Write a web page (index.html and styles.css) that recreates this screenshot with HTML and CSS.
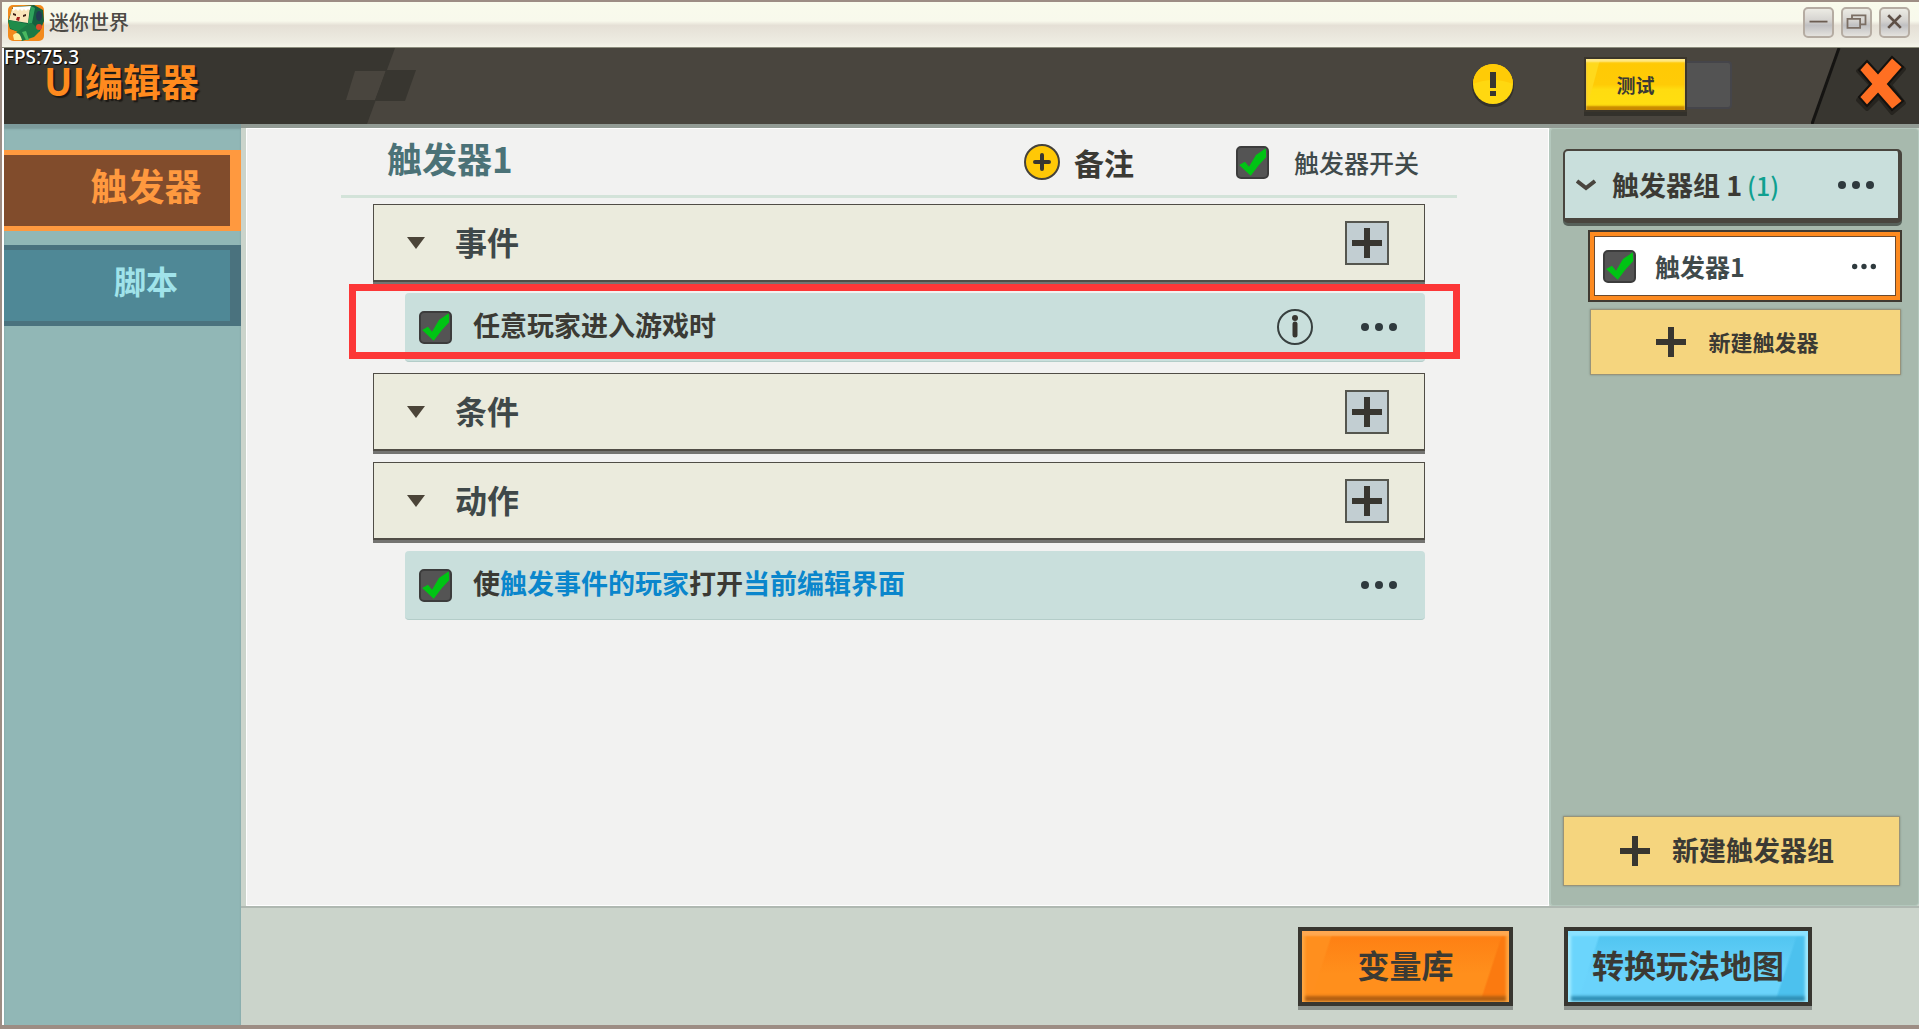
FILE: index.html
```html
<!DOCTYPE html>
<html lang="zh-CN">
<head>
    <meta charset="UTF-8">
    <meta name="viewport" content="width=device-width, initial-scale=1.0">
    <title>迷你世界</title>
    <link rel="stylesheet" href="styles.css">
</head>
<body>
    <!-- shared icons -->
    <svg class="icon-defs" aria-hidden="true">
        <symbol id="plus" viewBox="0 0 30 30">
            <path d="M12 0h6v12h12v6H18v12h-6V18H0v-6h12z" fill="#383630"/>
        </symbol>
        <symbol id="dots" viewBox="0 0 36 10">
            <circle cx="4" cy="5" r="4"/><circle cx="18" cy="5" r="4"/><circle cx="32" cy="5" r="4"/>
        </symbol>
    </svg>

    <div class="window">
        <div class="titlebar">
            <svg class="app-icon" viewBox="0 0 36 36">
                <rect width="36" height="36" rx="5" fill="#f28a1c"/>
                <path d="M5 2L26 0L35 5L36 16L32 26L24 30L14 28L2 24L0 16z" fill="#14603f"/>
                <path d="M4 4L22 2L20 18L1 15z" fill="#fbe6bb"/>
                <path d="M5 2l18-1-1 4-2-1-2 2-2-2-2 2-2-2-2 2-2-2-3 2z" fill="#fff"/>
                <path d="M23 1L27 3L24 18L20 19z" fill="#2fa35c"/>
                <path d="M0 15L20 19L22 23L10 27L2 23z" fill="#1f8c4a"/>
                <path d="M20 19l4-1 8 8-6 6-12 4-6-8z" fill="#1d7a45"/>
                <path d="M5 30q6-6 9 5H6z" fill="#fdf0a0"/>
                <path d="M14 27l4 8h3l-3-9z" fill="#48b860"/>
                <ellipse cx="31" cy="11" rx="3" ry="5" fill="#233a52"/>
                <circle cx="31" cy="22" r="3" fill="#d9482a"/>
                <path d="M5 8l3 1v2l-3-1zM15 10l3-1v2l-3 1z" fill="#402018"/>
                <path d="M9 12l3 0l-1 4l-3-1z" fill="#a8201c"/>
            </svg>
            <span class="app-name">迷你世界</span>
            <div class="window-buttons">
                <button type="button" aria-label="最小化"><svg viewBox="0 0 30 30"><path d="M5 14h20" stroke="#6b5d52" stroke-width="2"/></svg></button>
                <button type="button" aria-label="还原"><svg viewBox="0 0 30 30"><path d="M10 11V7h15v10h-5M5 11h14v10H5z" fill="none" stroke="#7b6e64" stroke-width="2"/></svg></button>
                <button type="button" aria-label="关闭"><svg viewBox="0 0 30 30"><path d="M8 7l14 14M22 7L8 21" stroke="#5e5047" stroke-width="3"/></svg></button>
            </div>
        </div>

        <div class="header">
            <svg class="header-left" viewBox="0 0 420 76">
                <path d="M0 0h391l-28 76H0z" fill="#383630"/>
                <path d="M351 23h31l-11 29h-29z" fill="#49453e"/>
                <path d="M382 22h30l-11 31h-30z" fill="#383630"/>
            </svg>
            <span class="fps">FPS:75.3</span>
            <h1>UI编辑器</h1>
            <div class="header-tools">
                <button type="button" class="warn" aria-label="提示">
                    <svg viewBox="0 0 44 44">
                        <circle cx="22" cy="23" r="21" fill="#33312b"/>
                        <circle cx="22" cy="21" r="20" fill="#ffd810"/>
                        <path d="M2 21a20 20 0 0 1 40 0q-20-8-40 0z" fill="#ffcb06"/>
                        <path d="M19 9h6v16h-6zM19 28h6v5h-6z" fill="#383630"/>
                    </svg>
                </button>
                <div class="test-switch"><button type="button">测试</button></div>
            </div>
            <button type="button" class="close" aria-label="关闭">
                <svg viewBox="0 0 108 76">
                    <path d="M28 0h80v76H0z" fill="#383630"/>
                    <path d="M28 0L1 76" stroke="#151412" stroke-width="3"/>
                    <path d="M56 15l12 13 13-17 12 10-14 16 14 18-12 10-13-16-12 12-9-9 13-15-13-14z" fill="#26241f" stroke="#26241f" stroke-width="4" stroke-linejoin="round"/>
                    <path d="M56 13l11 12 14-16 11 10-15 17 15 17-11 9-14-16-11 12-8-9 12-13-12-14z" fill="#ff6f22" stroke="#14120f" stroke-width="2"/>
                </svg>
            </button>
        </div>

        <div class="body">
            <nav class="sidebar">
                <button type="button" class="tab active">触发器</button>
                <button type="button" class="tab">脚本</button>
            </nav>

            <div class="content">
                <div class="panels">
                    <main class="editor">
                        <div class="editor-head">
                            <h2>触发器1</h2>
                            <button type="button" class="note">
                                <svg viewBox="0 0 36 36"><circle cx="18" cy="18" r="17" fill="#ffc806" stroke="#45423b" stroke-width="2"/><path d="M18 11v14M11 18h14" stroke="#383630" stroke-width="4" stroke-linecap="round"/></svg>
                                备注
                            </button>
                            <label class="toggle"><input type="checkbox" checked>触发器开关</label>
                        </div>

                        <div class="blocks">
                            <section class="block">
                                <h3>事件</h3>
                                <button type="button" class="add" aria-label="添加事件"><svg><use href="#plus"/></svg></button>
                            </section>
                            <div class="line marked">
                                <input type="checkbox" id="line1" checked>
                                <label for="line1">任意玩家进入游戏时</label>
                                <button type="button" class="info" aria-label="说明">
                                    <svg viewBox="0 0 36 36"><circle cx="18" cy="18" r="17" fill="none" stroke="#38403f" stroke-width="2"/><path d="M18 15v11" stroke="#383630" stroke-width="5" stroke-linecap="round"/><circle cx="18" cy="9" r="3" fill="#383630"/></svg>
                                </button>
                                <button type="button" class="more" aria-label="更多"><svg><use href="#dots"/></svg></button>
                            </div>
                            <section class="block">
                                <h3>条件</h3>
                                <button type="button" class="add" aria-label="添加条件"><svg><use href="#plus"/></svg></button>
                            </section>
                            <section class="block">
                                <h3>动作</h3>
                                <button type="button" class="add" aria-label="添加动作"><svg><use href="#plus"/></svg></button>
                            </section>
                            <div class="line">
                                <input type="checkbox" id="line2" checked>
                                <label for="line2">使<a href="#">触发事件的玩家</a>打开<a href="#">当前编辑界面</a></label>
                                <button type="button" class="more" aria-label="更多"><svg><use href="#dots"/></svg></button>
                            </div>
                        </div>
                    </main>

                    <aside class="groups">
                        <div class="group">
                            <svg class="chevron" viewBox="0 0 20 12"><path d="M1 2l9 7 9-7" fill="none" stroke="#49453e" stroke-width="4"/></svg>
                            <span>触发器组 1</span>
                            <span class="count">(1)</span>
                            <button type="button" class="more" aria-label="更多"><svg><use href="#dots"/></svg></button>
                        </div>
                        <div class="trigger">
                            <input type="checkbox" id="trigger1" checked>
                            <label for="trigger1">触发器1</label>
                            <button type="button" class="more small" aria-label="更多"><svg><use href="#dots"/></svg></button>
                        </div>
                        <button type="button" class="new new-trigger"><svg><use href="#plus"/></svg><span>新建触发器</span></button>
                        <button type="button" class="new new-group"><svg><use href="#plus"/></svg><span>新建触发器组</span></button>
                    </aside>
                </div>

                <footer class="actions">
                    <button type="button" class="big orange">变量库</button>
                    <button type="button" class="big blue">转换玩法地图</button>
                </footer>
            </div>
        </div>
    </div>
</body>
</html>
```
FILE: styles.css
```css
* {
    box-sizing: border-box;
}
body {
    margin: 0;
    font-family: "Noto Sans CJK SC", sans-serif;
    font-weight: bold;
    color: #3b3a34;
}
button {
    font: inherit;
    color: inherit;
    background: none;
    border: none;
    padding: 0;
    cursor: pointer;
}
svg {
    display: block;
}
h1, h2, h3 {
    margin: 0;
}
a {
    color: #0a86cc;
    text-decoration: none;
}
.icon-defs {
    display: none;
}

/* tick boxes */
input[type="checkbox"] {
    appearance: none;
    flex: none;
    width: 33px;
    height: 33px;
    margin: 0;
    border: 2px solid #3c3c3c;
    border-radius: 5px;
    background: #545454;
}
input[type="checkbox"]:checked::before {
    content: "";
    display: block;
    height: 100%;
    background: #00c414;
    clip-path: polygon(4% 60%, 24% 49%, 38% 66%, 62% 26%, 96% 3%, 97% 34%, 72% 60%, 44% 97%);
}

/* window frame */
.window {
    display: flex;
    flex-direction: column;
    min-height: 100vh;
    border: solid #9d8d84;
    border-width: 2px 0 4px 2px;
}
.titlebar {
    display: flex;
    align-items: center;
    height: 46px;
    padding: 0 9px 4px 6px;
    background: linear-gradient(#f9fbec 0%, #f8f9ec 42%, #e5e0d6 52%, #eeece2 90%, #f6f5ea 100%);
    border-bottom: 1px solid #8c8d7d;
}
.app-icon {
    width: 36px;
    height: 36px;
}
.app-name {
    margin-left: 5px;
    padding-bottom: 2px;
    font-size: 20px;
    font-weight: 500;
    color: #4d4a45;
}
.window-buttons {
    display: flex;
    gap: 7px;
    margin-left: auto;
    padding-bottom: 1px;
}
.window-buttons button {
    width: 31px;
    height: 31px;
    border: 2px solid #b5aca2;
    border-radius: 5px;
    background: linear-gradient(#ecebe4, #d4d2cf 45%, #c0c0c2 60%, #e4e2dd);
}

/* game header */
.header {
    position: relative;
    display: flex;
    align-items: center;
    height: 76px;
    margin-left: 2px;
    background: #49453e;
}
.header-left {
    position: absolute;
    left: 0;
    top: 0;
    width: 420px;
    height: 76px;
}
.fps {
    position: absolute;
    left: 0;
    top: 0;
    font: 500 19px/18px "Noto Sans", sans-serif;
    color: #fff;
    text-shadow: 1px 1px 1px #000;
    z-index: 1;
}
.header h1 {
    position: relative;
    margin-left: 40px;
    padding-bottom: 12px;
    font-size: 38px;
    line-height: 48px;
    font-weight: bold;
    color: #ff8a1e;
    text-shadow: 2px 2px 1px #1c1a16;
}
.header-tools {
    display: flex;
    align-items: center;
    gap: 69px;
    margin-left: auto;
    margin-right: 79px;
    padding-bottom: 2px;
}
.warn svg {
    width: 44px;
    height: 44px;
}
.test-switch {
    width: 148px;
    height: 48px;
    border: 2px solid #45454a;
    border-radius: 4px;
    background: #535353;
}
.test-switch button {
    display: block;
    width: 103px;
    height: 55px;
    margin: -6px 0 0 -2px;
    border: 2px solid #3a352b;
    background: linear-gradient(105deg, #ffd91c 12%, transparent 13%), linear-gradient(#ffc905 0%, #ffcb06 50%, #ffdc10 60%, #ffdf10 100%);
    box-shadow: inset 0 3px 2px #ffe98a, inset 0 -4px 2px #c98a00, 0 4px 0 #33312b;
    font-size: 19px;
    line-height: 28px;
}
.close svg {
    width: 108px;
    height: 76px;
}

.body {
    display: flex;
    flex: 1;
    margin-left: 2px;
    background: #cbd4cb;
    box-shadow: inset 0 4px 0 #929b94;
}

/* left tabs */
.sidebar {
    display: flex;
    flex-direction: column;
    gap: 14px;
    width: 237px;
    padding-top: 26px;
    background: #91b7b6;
    box-shadow: inset 0 5px 2px #7c9a9b;
}
.tab {
    height: 81px;
    padding: 0 0 12px 58px;
    border: solid #4a727e;
    border-width: 5px 11px 5px 0;
    background: #4f8896;
    color: #a0e3ea;
    font-size: 32px;
    line-height: 48px;
}
.tab.active {
    border-color: #ff993f;
    background: #814c2c;
    color: #ff993f;
    font-size: 37px;
}

.content {
    display: flex;
    flex: 1;
    flex-direction: column;
}
.panels {
    display: flex;
    flex: 1;
    padding: 4px 0 0 5px;
    border-bottom: 2px solid #afb8b1;
}

/* trigger editor */
.editor {
    flex: 1;
    padding: 0 91px 0 94px;
    border: 1px solid #fff;
    background: #f2f2f1;
}
.editor-head {
    display: flex;
    align-items: center;
    height: 69px;
    padding: 0 38px 0 46px;
    border-bottom: 3px solid #d3e3d9;
}
.editor-head h2 {
    margin-right: auto;
    padding-bottom: 8px;
    font-size: 35px;
    line-height: 48px;
    color: #4b7277;
}
.note {
    display: flex;
    align-items: center;
    gap: 14px;
    font-size: 30px;
}
.note svg {
    width: 36px;
    height: 36px;
}
.toggle {
    display: flex;
    align-items: center;
    gap: 25px;
    margin-left: 102px;
    font-size: 25px;
    font-weight: 500;
    color: #404a4b;
}
.blocks {
    display: flex;
    flex-direction: column;
    gap: 11px;
    padding: 6px 32px 0 32px;
}
.block {
    display: flex;
    align-items: center;
    justify-content: space-between;
    height: 78px;
    padding: 0 35px 0 33px;
    border: 1px solid #504d46;
    border-bottom-width: 2px;
    background: #ebebdd;
    box-shadow: 0 3px 0 #747471;
}
.block h3 {
    display: flex;
    align-items: center;
    gap: 30px;
    padding-bottom: 3px;
    font-size: 32px;
    color: #3f4849;
}
.block h3::before {
    content: "";
    margin-top: 3px;
    border: solid transparent;
    border-width: 12px 9px 0;
    border-top-color: #4b4438;
}
.add {
    display: flex;
    align-items: center;
    justify-content: center;
    width: 44px;
    height: 44px;
    border: 2px solid #55564f;
    background: #c2ced2;
}
.add svg, .new svg {
    width: 30px;
    height: 30px;
}
.line {
    position: relative;
    display: flex;
    align-items: center;
    height: 69px;
    margin-left: 32px;
    padding: 0 28px 0 14px;
    border-bottom: 1px solid #b4cdc9;
    border-radius: 4px;
    background: #c9dfdc;
}
.line label {
    flex: 1;
    padding: 0 0 6px 21px;
    font-size: 27px;
}
.info {
    margin-right: 48px;
}
.info svg {
    width: 36px;
    height: 36px;
}
.more svg {
    width: 36px;
    height: 10px;
    fill: #2f3a3e;
}
.more.small svg {
    width: 24px;
    height: 7px;
}
/* red frame drawn over the line */
.marked::after {
    content: "";
    position: absolute;
    inset: -9px -35px 2px -56px;
    border: 7px solid #fc3737;
    pointer-events: none;
}

/* trigger groups */
.groups {
    display: flex;
    flex-direction: column;
    width: 370px;
    padding: 20px 16px 19px 12px;
    border: 1px solid #b4c8bd;
    border-left-width: 2px;
    border-radius: 4px;
    background: #a7b9ad;
}
.group {
    display: flex;
    align-items: center;
    height: 74px;
    padding: 0 24px 0 11px;
    border: solid #49453e;
    border-width: 2px 4px 5px 2px;
    border-radius: 5px;
    background: #c9dfdc;
    box-shadow: 0 3px 0 #566059;
    font-size: 27px;
}
.chevron {
    width: 20px;
    height: 12px;
    margin-right: 16px;
}
.count {
    margin-left: 5px;
    color: #10a090;
    font-size: 25px;
    font-weight: 500;
}
.group .more, .trigger .more {
    margin-left: auto;
}
.trigger {
    display: flex;
    align-items: center;
    height: 72px;
    margin: 7px 0 0 25px;
    padding: 0 24px 0 9px;
    border: 2px solid #3f3a32;
    background: #fff;
    box-shadow: inset 0 0 0 4px #fd8a20, inset 0 0 0 5px #6a4a30;
    font-size: 25px;
    color: #404a4b;
}
.trigger input {
    margin: 0 19px 0 4px;
}
.new {
    display: flex;
    align-items: center;
    justify-content: center;
    border: 1px solid #98937a;
    background: #f5d57e;
    box-shadow: 0 0 2px #7e8c80;
}
.new span {
    padding-bottom: 3px;
}
.new-trigger {
    gap: 22px;
    height: 66px;
    margin: 7px 1px 0 27px;
    padding-right: 16px;
    font-size: 22px;
}
.new-group {
    gap: 22px;
    height: 70px;
    margin: auto 2px 0 0;
    padding-right: 9px;
    font-size: 27px;
}

/* bottom bar */
.actions {
    display: flex;
    justify-content: flex-end;
    gap: 51px;
    padding: 19px 107px 19px 0;
}
.big {
    height: 79px;
    padding-bottom: 5px;
    border: 4px solid #383630;
    font-size: 32px;
}
.orange {
    width: 215px;
    background: linear-gradient(108deg, #ff8f1e 13%, transparent 14%, transparent 87%, #fb7a10 88%), linear-gradient(#fe7e12, #ff8f1c 60%);
    box-shadow: inset 0 5px 2px #ffa850, inset 3px 0 3px #ffa640, inset -3px 0 3px #ffa640, inset 0 -6px 3px #b35f12, 0 4px 0 #8c928d;
}
.blue {
    width: 248px;
    background: linear-gradient(108deg, #6bd5fc 12%, transparent 13%, transparent 87%, #4cc1ee 88%), linear-gradient(#4ec3ef, #6ad3fb 60%);
    box-shadow: inset 0 5px 2px #8be2ff, inset 3px 0 3px #a5ecff, inset -3px 0 3px #a5ecff, inset 0 -6px 3px #3091b8, 0 4px 0 #8c928d;
}
```
